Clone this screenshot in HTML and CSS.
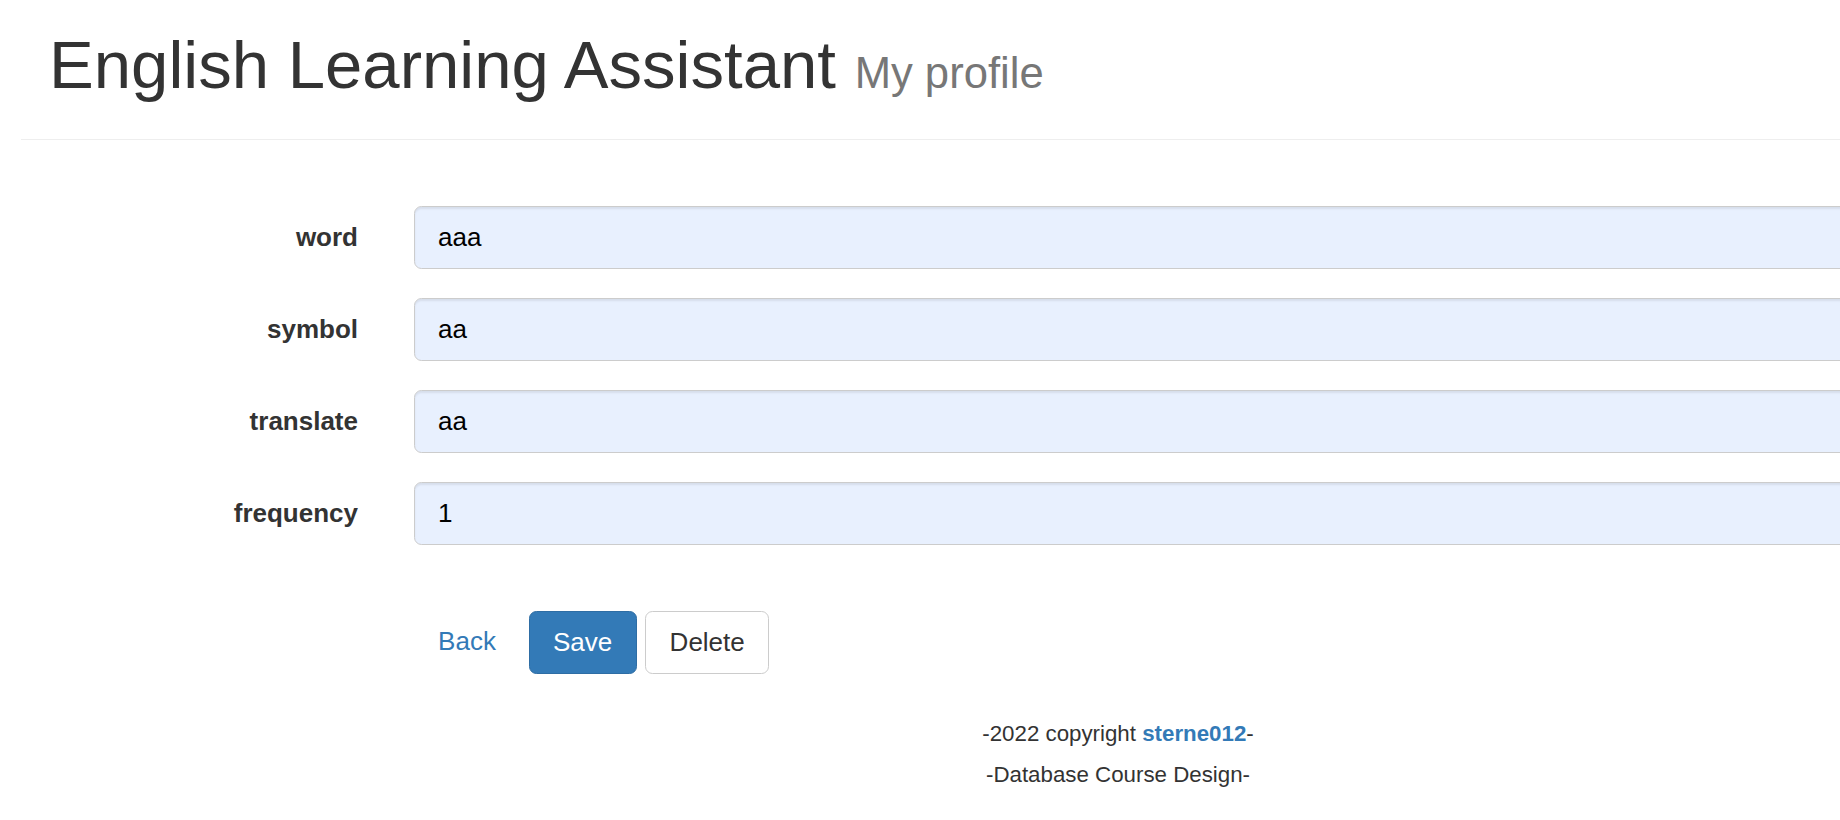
FILE: index.html
```html
<!DOCTYPE html>
<html lang="en">
<head>
<meta charset="utf-8">
<title>English Learning Assistant - My profile</title>
<link rel="stylesheet" href="styles.css">
</head>
<body>
<div class="page">
  <header class="page-header">
    <h1>English Learning Assistant <small>My profile</small></h1>
  </header>

  <form class="form">
    <div class="form-group">
      <label class="control-label" for="word">word</label>
      <input class="form-control" id="word" type="text" value="aaa">
    </div>
    <div class="form-group">
      <label class="control-label" for="symbol">symbol</label>
      <input class="form-control" id="symbol" type="text" value="aa">
    </div>
    <div class="form-group">
      <label class="control-label" for="translate">translate</label>
      <input class="form-control" id="translate" type="text" value="aa">
    </div>
    <div class="form-group">
      <label class="control-label" for="frequency">frequency</label>
      <input class="form-control" id="frequency" type="text" value="1">
    </div>

    <div class="form-actions">
      <span></span>
      <div class="btn-row">
        <a class="btn btn-link" href="#">Back</a>
        <button class="btn btn-primary" type="button">Save</button>
        <button class="btn btn-default" type="button">Delete</button>
      </div>
    </div>
  </form>

  <footer class="footer">
    <p>-2022 copyright <a href="#">sterne012</a>-</p>
    <p>-Database Course Design-</p>
  </footer>
</div>
</body>
</html>
```

FILE: styles.css
```css
html, body {
  margin: 0;
  padding: 0;
  background: #fff;
  overflow: hidden;
}

body {
  font-family: "Liberation Sans", Arial, Helvetica, sans-serif;
  font-size: 26px;
  line-height: 37.2px;
  color: #333;
}

.page {
  width: 2236px;
}

.page-header {
  margin: 28px 0 0 21px;
  padding-bottom: 37.7px;
  border-bottom: 1px solid #eee;
}

.page-header h1 {
  margin: 0;
  padding-left: 28px;
  font-size: 67.1px;
  font-weight: 500;
  line-height: 73.3px;
  color: #333;
}

.page-header h1 small {
  font-size: 65%;
  font-weight: 400;
  line-height: 1;
  color: #777;
}

.form {
  display: flex;
  flex-direction: column;
  margin-top: 66px;
}

.form-group {
  display: grid;
  grid-template-columns: 358px 1fr;
  column-gap: 56px;
  margin-bottom: 29px;
}

.control-label {
  display: block;
  padding-top: 13px;
  text-align: right;
  font-weight: 700;
  font-size: 26px;
  line-height: 37.2px;
  color: #333;
}

.form-control {
  display: block;
  box-sizing: border-box;
  width: 100%;
  height: 63px;
  margin: 0;
  padding: 11px 23px;
  font-family: "Liberation Sans", Arial, Helvetica, sans-serif;
  font-size: 26px;
  line-height: 37.2px;
  color: #000;
  background: #e8f0fe;
  border: 1px solid #ccc;
  border-radius: 7.4px;
  box-shadow: inset 0 2px 2px rgba(0, 0, 0, 0.075);
  outline: none;
}

.form-actions {
  display: grid;
  grid-template-columns: 358px 1fr;
  column-gap: 56px;
  margin-top: 37px;
}

.btn-row {
  display: flex;
  gap: 8.6px;
}

.btn {
  display: inline-block;
  box-sizing: border-box;
  height: 63px;
  margin: 0;
  padding: 11px 22px;
  font-family: "Liberation Sans", Arial, Helvetica, sans-serif;
  font-size: 26px;
  line-height: 37.2px;
  font-weight: 400;
  text-align: center;
  text-decoration: none;
  border: 1px solid transparent;
  border-radius: 7.4px;
  cursor: pointer;
}

.btn-link {
  color: #337ab7;
  background: transparent;
  width: 106px;
}

.btn-primary {
  color: #fff;
  background: #337ab7;
  border-color: #2e6da4;
  width: 108px;
}

.btn-default {
  color: #333;
  background: #fff;
  border-color: #ccc;
  width: 124px;
}

.footer {
  margin-top: 40.5px;
  text-align: center;
  font-size: 22.3px;
  color: #333;
}

.footer p {
  margin: 0;
  line-height: 40.6px;
}

.footer a {
  color: #337ab7;
  font-weight: 700;
  text-decoration: none;
}
```
